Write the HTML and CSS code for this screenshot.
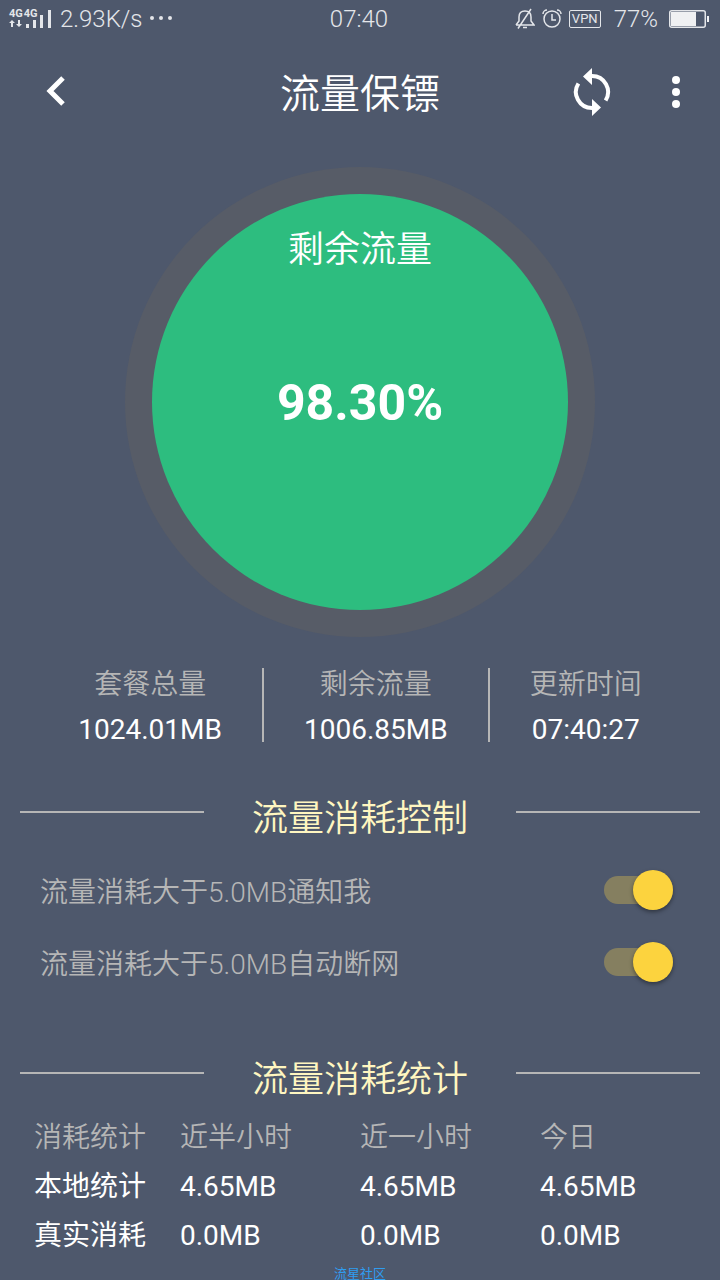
FILE: index.html
```
<!DOCTYPE html>
<html lang="zh-CN">
<head>
    <meta charset="UTF-8">
    <meta name="viewport" content="width=device-width, initial-scale=1.0">
    <title>流量保镖</title>
    <link rel="stylesheet" href="styles.css">
</head>
<body>
    <div class="status-bar">
        <div class="status-left">
            <div class="signal">
                <div class="signal-text"><span>4G</span><span>4G</span></div>
                <svg width="44" height="20" viewBox="0 0 44 20" fill="#e4e6ea">
                    <path d="M3 11l3 3H4v4H2v-4H0zM10 18l-3-3h2v-4h2v4h2z"/>
                    <path d="M17 15h3v4h-3zM24 11h3v8h-3zM31 6h3v13h-3zM39 1h3v18h-3z"/>
                </svg>
            </div>
            <span>2.93K/s</span>
            <svg width="26" height="6" viewBox="0 0 26 6" fill="#e4e6ea">
                <circle cx="2" cy="2" r="2"/>
                <circle cx="11" cy="2" r="2"/>
                <circle cx="20" cy="2" r="2"/>
            </svg>
        </div>
        <span class="clock">07:40</span>
        <div class="status-right">
            <svg width="20" height="22" viewBox="0 0 20 22" fill="none" stroke="#e4e6ea" stroke-width="1.5">
                <path d="M1 17h18l-3-4V9c0-3.5-2-6-6-6S4 5.5 4 9v4l-3 4M8 19.5h4M3 20.5L16 1"/>
            </svg>
            <svg width="20" height="20" viewBox="0 0 20 20" fill="none" stroke="#e4e6ea" stroke-width="1.5">
                <circle cx="10" cy="10" r="8"/>
                <path d="M10 5v6h4M1 5a4 4 0 0 1 4-4M19 5a4 4 0 0 0-4-4"/>
            </svg>
            <span class="vpn">VPN</span>
            <span class="percent">77%</span>
            <svg width="40" height="18" viewBox="0 0 40 18">
                <rect x="0.75" y="0.75" width="35.5" height="16.5" rx="2" fill="none" stroke="#e4e6ea" stroke-width="1.5"/>
                <path d="M2 2h25v14H2zM38 6h2v6h-2z" fill="#f0f1f3"/>
            </svg>
        </div>
    </div>

    <header class="toolbar">
        <button class="icon-btn back" aria-label="返回">
            <svg width="48" height="48" viewBox="0 0 48 48" fill="none" stroke="#fff" stroke-width="5">
                <path d="M33 10L20 23l13 13"/>
            </svg>
        </button>
        <h1>流量保镖</h1>
        <div class="actions">
            <button class="icon-btn" aria-label="刷新">
                <svg width="48" height="48" viewBox="0 0 48 48">
                    <path d="M24 8a16 16 0 0 1 13.6 24.5M24 40A16 16 0 0 1 10.4 15.5" fill="none" stroke="#fff" stroke-width="4"/>
                    <path d="M24 0v17l-9-8.5zM24 31v17l9-8.5z" fill="#fff"/>
                </svg>
            </button>
            <button class="icon-btn" aria-label="更多">
                <svg width="48" height="48" viewBox="0 0 48 48" fill="#fff">
                    <circle cx="24" cy="12" r="4"/>
                    <circle cx="24" cy="24" r="4"/>
                    <circle cx="24" cy="36" r="4"/>
                </svg>
            </button>
        </div>
    </header>

    <main>
        <div class="gauge">
            <div class="gauge-inner">
                <span class="gauge-label">剩余流量</span>
                <strong class="gauge-value">98.30%</strong>
            </div>
        </div>

        <dl class="summary">
            <div class="summary-item">
                <dt>套餐总量</dt>
                <dd>1024.01MB</dd>
            </div>
            <div class="summary-item">
                <dt>剩余流量</dt>
                <dd>1006.85MB</dd>
            </div>
            <div class="summary-item">
                <dt>更新时间</dt>
                <dd>07:40:27</dd>
            </div>
        </dl>

        <section class="control">
            <h2>流量消耗控制</h2>
            <div class="option">
                <label for="notify">流量消耗大于5.0MB通知我</label>
                <input type="checkbox" class="switch" id="notify" checked>
            </div>
            <div class="option">
                <label for="cutoff">流量消耗大于5.0MB自动断网</label>
                <input type="checkbox" class="switch" id="cutoff" checked>
            </div>
        </section>

        <section class="stats">
            <h2>流量消耗统计</h2>
            <table>
                <tr>
                    <th>消耗统计</th>
                    <th>近半小时</th>
                    <th>近一小时</th>
                    <th>今日</th>
                </tr>
                <tr>
                    <td>本地统计</td>
                    <td>4.65MB</td>
                    <td>4.65MB</td>
                    <td>4.65MB</td>
                </tr>
                <tr>
                    <td>真实消耗</td>
                    <td>0.0MB</td>
                    <td>0.0MB</td>
                    <td>0.0MB</td>
                </tr>
            </table>
        </section>
    </main>

    <div class="watermark">流星社区</div>
</body>
</html>
```
FILE: styles.css
```
* {
    box-sizing: border-box;
}
body {
    margin: 0;
    min-height: 100vh;
    position: relative;
    background-color: #4e586c;
    color: #fff;
    font-family: Roboto, "Noto Sans CJK SC", sans-serif;
    font-size: 28px;
    font-weight: 350;
    line-height: 36px;
}

/* Status bar */
.status-bar {
    display: grid;
    grid-template-columns: 1fr auto 1fr;
    align-items: center;
    height: 38px;
    padding: 0 11px 0 9px;
    color: #e4e6ea;
    font-size: 24px;
    font-weight: 300;
}
.status-left, .status-right {
    display: flex;
    align-items: center;
    gap: 7px;
}
.status-right {
    justify-content: flex-end;
}
.signal {
    position: relative;
    height: 20px;
}
.signal svg {
    display: block;
}
.signal-text {
    position: absolute;
    top: -2px;
    left: 0;
    display: flex;
    gap: 1px;
    font-size: 11px;
    font-weight: 700;
    line-height: 13px;
}
.vpn {
    padding: 0 2px;
    border: 1px solid #e4e6ea;
    border-radius: 2px;
    font-size: 13px;
    font-weight: 400;
    line-height: 16px;
}
.percent {
    margin: 0 4px 0 6px;
}

/* Toolbar */
.toolbar {
    display: grid;
    grid-template-columns: 1fr auto 1fr;
    align-items: center;
    height: 108px;
    padding: 0 20px;
}
.toolbar h1 {
    margin: 0;
    padding-top: 6px;
    font-size: 40px;
    font-weight: 350;
    line-height: 48px;
}
.icon-btn {
    width: 48px;
    height: 48px;
    padding: 0;
    border: none;
    background: none;
    cursor: pointer;
}
.icon-btn svg {
    display: block;
}
.back {
    margin-left: 10px;
}
.actions {
    display: flex;
    justify-content: flex-end;
    gap: 36px;
}

/* Gauge */
.gauge {
    width: 470px;
    height: 470px;
    margin: 21px auto 31px;
    padding: 27px;
    border-radius: 50%;
    background-color: #575c67;
}
.gauge-inner {
    display: grid;
    grid-template-rows: 1fr auto 1fr;
    justify-items: center;
    height: 100%;
    padding: 34px 0 32px;
    border-radius: 50%;
    background-color: #2dbd7f;
}
.gauge-label {
    font-size: 36px;
    line-height: 44px;
}
.gauge-value {
    font-size: 50px;
    font-weight: 700;
    line-height: 60px;
}

/* Summary */
.summary {
    display: flex;
    justify-content: center;
    margin: 0 0 55px;
    text-align: center;
}
.summary-item {
    padding: 3px 40px 0;
}
.summary-item + .summary-item {
    border-left: 2px solid #b6b6b6;
}
.summary dt {
    margin-bottom: 19px;
    color: #b6b6b6;
    line-height: 28px;
}
.summary dd {
    margin: 0;
    font-weight: 400;
    line-height: 24px;
}

/* Sections */
h2 {
    display: flex;
    gap: 48px;
    margin: 0;
    padding: 0 20px;
    color: #fff6c0;
    font-size: 36px;
    font-weight: 350;
    line-height: 44px;
}
h2::before, h2::after {
    content: "";
    flex: 1;
    height: 2px;
    margin-top: 14px;
    background-color: #b6b6b6;
}
.control {
    margin-bottom: 60px;
}
.control h2 {
    margin-bottom: 13px;
}
.option {
    display: flex;
    align-items: center;
    justify-content: space-between;
    height: 72px;
    padding: 0 47px 0 40px;
    color: #b6b6b6;
}
.option label {
    padding-top: 6px;
}
.switch {
    appearance: none;
    position: relative;
    width: 69px;
    height: 28px;
    margin: 0;
    border-radius: 14px;
    background-color: #857f60;
    cursor: pointer;
}
.switch::after {
    content: "";
    position: absolute;
    top: -6px;
    left: 0;
    width: 40px;
    height: 40px;
    border-radius: 50%;
    background-color: #b6b6b6;
    box-shadow: 0 2px 4px rgba(0, 0, 0, 0.4);
}
.switch:checked::after {
    right: 0;
    left: auto;
    background-color: #fcd33e;
}

/* Statistics table */
table {
    width: 100%;
    margin-top: 12px;
    border-collapse: collapse;
    table-layout: fixed;
}
th, td {
    width: 25%;
    height: 49px;
    padding: 0;
    font-weight: 400;
    text-align: left;
}
th:first-child, td:first-child {
    padding-left: 34px;
}
th {
    height: 48px;
    color: #b6b6b6;
    font-weight: 350;
}

.watermark {
    position: absolute;
    right: 0;
    bottom: 0;
    left: 0;
    color: #2f9df0;
    font-size: 13px;
    font-weight: 400;
    line-height: 12px;
    text-align: center;
}
```
